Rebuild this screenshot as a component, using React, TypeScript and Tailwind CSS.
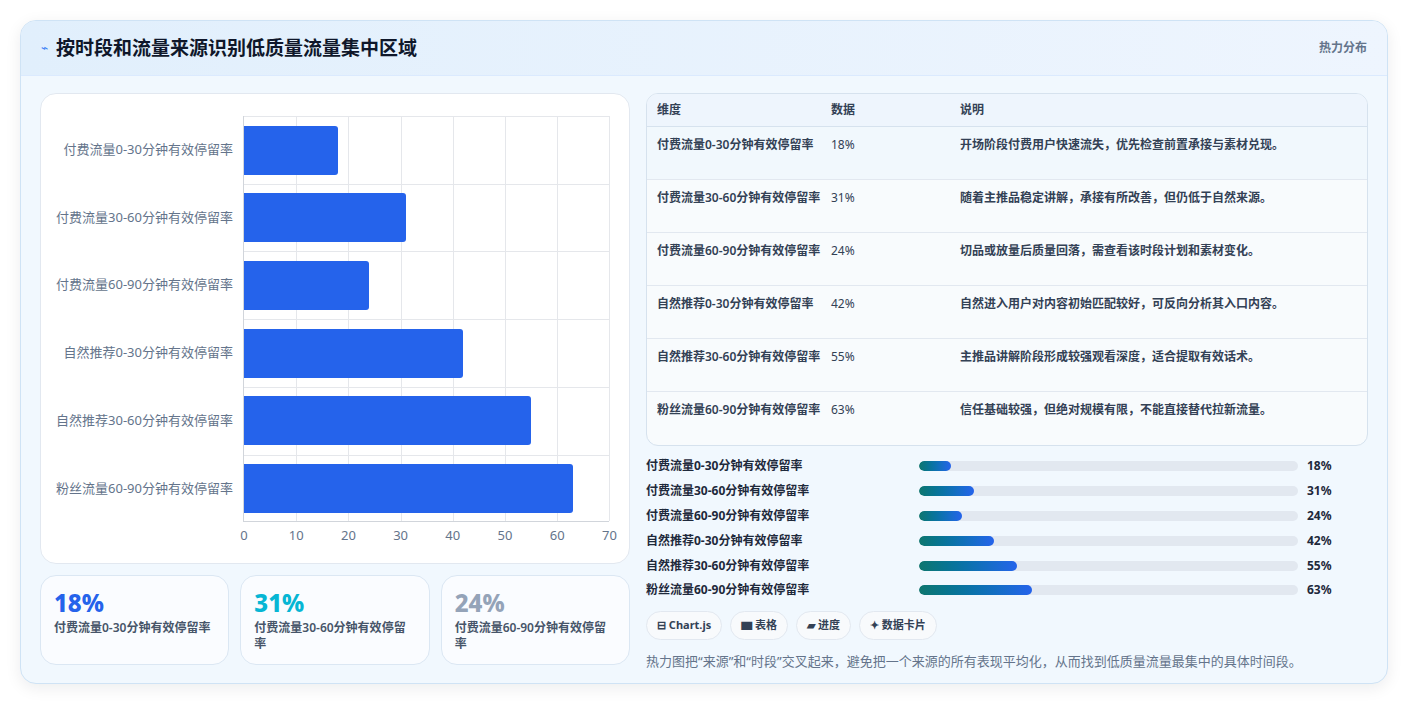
const rows = [
  { name: '付费流量0-30分钟有效停留率', v: 18, note: '开场阶段付费用户快速流失，优先检查前置承接与素材兑现。' },
  { name: '付费流量30-60分钟有效停留率', v: 31, note: '随着主推品稳定讲解，承接有所改善，但仍低于自然来源。' },
  { name: '付费流量60-90分钟有效停留率', v: 24, note: '切品或放量后质量回落，需查看该时段计划和素材变化。' },
  { name: '自然推荐0-30分钟有效停留率', v: 42, note: '自然进入用户对内容初始匹配较好，可反向分析其入口内容。' },
  { name: '自然推荐30-60分钟有效停留率', v: 55, note: '主推品讲解阶段形成较强观看深度，适合提取有效话术。' },
  { name: '粉丝流量60-90分钟有效停留率', v: 63, note: '信任基础较强，但绝对规模有限，不能直接替代拉新流量。' },
];

const font = { fontFamily: "'Noto Sans', 'Noto Sans CJK SC', sans-serif" };

function Chart() {
  const ticks = [0, 10, 20, 30, 40, 50, 60, 70];
  return (
    <div className="h-[471px] rounded-2xl border border-[#e2e8f0] bg-white pt-[22px] pl-[14px]">
      <div className="flex">
        <div className="w-[188px] pr-[10px] flex flex-col">
          {rows.map((r) => (
            <div key={r.name} className="h-[67.7px] flex items-center justify-end text-[13px] text-[#64748b]">
              {r.name}
            </div>
          ))}
        </div>
        <div className="relative w-[366px] h-[406px] border-l border-b border-[#d1d5db]">
          {ticks.slice(1).map((t) => (
            <div key={t} className="absolute top-0 bottom-0 w-px bg-[#e5e7eb]" style={{ left: t * 5.22 }} />
          ))}
          {[0, 1, 2, 3, 4, 5].map((i) => (
            <div key={i} className="absolute left-0 right-0 h-px bg-[#e5e7eb]" style={{ top: i * 67.7 }} />
          ))}
          {rows.map((r, i) => (
            <div
              key={r.name}
              className="absolute left-0 h-[49px] bg-[#2563eb] rounded-r-[3px]"
              style={{ top: i * 67.7 + 9.5, width: r.v * 5.22 }}
            />
          ))}
          {ticks.map((t) => (
            <div key={t} className="absolute top-[410px] text-[13px] text-[#64748b] -translate-x-1/2" style={{ left: t * 5.22 }}>
              {t}
            </div>
          ))}
        </div>
      </div>
    </div>
  );
}

function StatCard({ v, label, color }: { v: string; label: string; color: string }) {
  return (
    <div className="flex-1 h-[90px] rounded-2xl border border-[#dbe7f3] bg-[#fafcff] px-[13px] pt-[12px]">
      <div className={`text-[24px] font-extrabold leading-[30px] ${color}`}>{v}</div>
      <div className="mt-[2px] text-[12px] font-semibold leading-[16px] text-[#475569]">{label}</div>
    </div>
  );
}

export default function App() {
  return (
    <div className="w-[1408px] h-[704px] bg-white p-[20px]" style={font}>
      <div className="h-[664px] rounded-2xl border border-[#cfe3f5] bg-[#f1f8fe] shadow-[0_4px_16px_rgba(15,23,42,0.08)] overflow-hidden">
        <div className="h-[55px] flex items-center justify-between px-[20px] bg-gradient-to-r from-[#e1effc] to-[#eef5fe] border-b border-[#dbeafe]">
          <div className="flex items-center gap-[8px]">
            <span className="text-[#3b82f6] text-[12px]">⌁</span>
            <span className="text-[19px] font-bold text-[#0f172a]">按时段和流量来源识别低质量流量集中区域</span>
          </div>
          <span className="text-[12px] font-semibold text-[#64748b]">热力分布</span>
        </div>
        <div className="flex gap-[16px] px-[19px] pt-[17px]">
          <div className="w-[590px] flex flex-col gap-[11px]">
            <Chart />
            <div className="flex gap-[11px]">
              <StatCard v="18%" label="付费流量0-30分钟有效停留率" color="text-[#2563eb]" />
              <StatCard v="31%" label="付费流量30-60分钟有效停留率" color="text-[#06b6d4]" />
              <StatCard v="24%" label="付费流量60-90分钟有效停留率" color="text-[#94a3b8]" />
            </div>
          </div>
          <div className="flex-1">
            <div className="rounded-xl border border-[#d6e2ee] bg-[#f8fbfd] overflow-hidden">
              <div className="h-[33px] flex items-center bg-[#eef5fd] border-b border-[#d6e2ee] text-[12px] font-bold text-[#334155]">
                <div className="w-[184px] pl-[10px]">维度</div>
                <div className="w-[129px]">数据</div>
                <div>说明</div>
              </div>
              {rows.map((r, i) => (
                <div key={r.name} className={`h-[53px] flex pt-[9px] text-[12px] text-[#334155] ${i < 5 ? 'border-b border-[#e2e8f0]' : ''} ${i === 0 ? 'bg-[#f1f8fd]' : ''}`}>
                  <div className="w-[184px] pl-[10px] pr-[10px] font-semibold leading-[18px]">{r.name}</div>
                  <div className="w-[129px] leading-[18px]">{r.v}%</div>
                  <div className="font-semibold leading-[18px]">{r.note}</div>
                </div>
              ))}
            </div>
            <div className="mt-[8px] flex flex-col">
              {rows.map((r) => (
                <div key={r.name} className="h-[24.8px] flex items-center text-[12px] font-bold text-[#1e293b]">
                  <div className="w-[273px]">{r.name}</div>
                  <div className="w-[379px] h-[10px] rounded-full bg-[#e2e8f0] overflow-hidden">
                    <div className="h-full rounded-full bg-gradient-to-r from-[#0f766e] to-[#2563eb]" style={{ width: r.v * 1.79 }} />
                  </div>
                  <div className="ml-[9px]">{r.v}%</div>
                </div>
              ))}
            </div>
            <div className="mt-[8px] flex gap-[8px] text-[11px] font-bold text-[#334155]">
              {['⊟ Chart.js', '▆ 表格', '▰ 进度', '✦ 数据卡片'].map((t) => (
                <span key={t} className="h-[29px] px-[10px] flex items-center rounded-full border border-[#e2e8f0] bg-[#f8fafc]">{t}</span>
              ))}
            </div>
            <div className="mt-[12px] text-[13px] text-[#64748b]">
              热力图把“来源”和“时段”交叉起来，避免把一个来源的所有表现平均化，从而找到低质量流量最集中的具体时间段。
            </div>
          </div>
        </div>
      </div>
    </div>
  );
}
